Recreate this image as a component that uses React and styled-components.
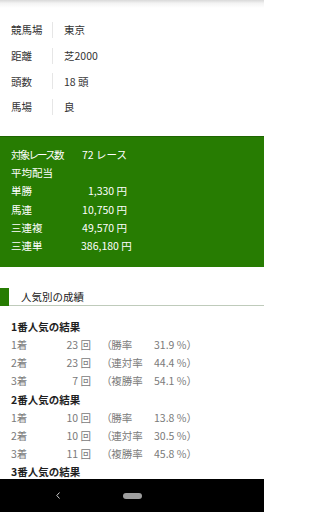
import React from "react";
import styled, { createGlobalStyle } from "styled-components";

const GlobalStyle = createGlobalStyle`
  html, body {
    margin: 0;
    padding: 0;
    background: #ffffff;
    overflow: hidden;
  }
  body {
    font-family: "Noto Sans CJK JP", "Noto Sans", sans-serif;
  }
`;

const GREEN = "#277c02";

const Screen = styled.div`
  width: 264px;
  height: 512px;
  display: flex;
  flex-direction: column;
  background: #ffffff;
`;

const Content = styled.div`
  flex: 1;
  overflow: hidden;
  display: flex;
  flex-direction: column;
`;

const TopShadow = styled.div`
  height: 8px;
  flex-shrink: 0;
  background: linear-gradient(to bottom, #d9d9d9, #f3f3f3 40%, #ffffff);
`;

const InfoList = styled.div`
  padding-top: 9px;
  display: flex;
  flex-direction: column;
`;

const InfoRow = styled.div`
  height: 25.7px;
  display: flex;
  align-items: center;
  padding-left: 11px;
  font-size: 10.5px;
  color: #333333;
`;

const InfoLabel = styled.div`
  width: 41px;
`;

const Divider = styled.div`
  width: 1px;
  height: 16px;
  background: #e6e6e6;
  margin-right: 11px;
`;

const Summary = styled.div`
  margin-top: 16.2px;
  background: ${GREEN};
  border-top: 1px solid #1e6500;
  padding: 9px 0 12px 11px;
  color: #ffffff;
  font-size: 10.5px;
  line-height: 18.2px;
`;

const SummaryRow = styled.div`
  display: grid;
  grid-template-columns: 70px 46px;
  align-items: center;
`;

const SummaryLabel = styled.div`
  letter-spacing: ${(props) => (props.$tight ? "-1.8px" : "normal")};
  white-space: nowrap;
`;

const SummaryValue = styled.div`
  text-align: right;
  white-space: nowrap;
`;

const SectionHeader = styled.div`
  margin-top: 21px;
  display: flex;
  height: 18px;
  flex-shrink: 0;
`;

const SectionMark = styled.div`
  width: 9px;
  background: ${GREEN};
`;

const SectionTitle = styled.div`
  flex: 1;
  padding-left: 12px;
  font-size: 10.5px;
  line-height: 17px;
  color: #222222;
  border-bottom: 1px solid #bfcbbb;
`;

const Results = styled.div`
  margin-top: 12px;
  padding-left: 11px;
  font-size: 10.5px;
  line-height: 18.1px;
`;

const GroupTitle = styled.div`
  font-weight: 700;
  color: #1f1f1f;
`;

const ResultRow = styled.div`
  display: grid;
  grid-template-columns: 40px 40px 63px auto;
  color: #7a7a7a;
  white-space: nowrap;
`;

const Count = styled.div`
  text-align: right;
`;

const RateLabel = styled.div`
  padding-left: 15px;
  font-feature-settings: "palt";
`;

const NavBar = styled.div`
  height: 33px;
  flex-shrink: 0;
  background: #000000;
  display: flex;
  align-items: center;
  padding-left: 56px;
`;

const HomePill = styled.div`
  width: 19px;
  height: 6px;
  border-radius: 3px;
  background: #9e9e9e;
  margin-left: 63px;
`;

const info = [
  ["競馬場", "東京"],
  ["距離", "芝2000"],
  ["頭数", "18 頭"],
  ["馬場", "良"],
];

const payouts = [
  ["単勝", "1,330 円"],
  ["馬連", "10,750 円"],
  ["三連複", "49,570 円"],
  ["三連単", "386,180 円"],
];

const rateNames = ["（勝率", "（連対率", "（複勝率"];

const groups = [
  { title: "1番人気の結果", counts: [23, 23, 7], rates: ["31.9", "44.4", "54.1"] },
  { title: "2番人気の結果", counts: [10, 10, 11], rates: ["13.8", "30.5", "45.8"] },
  { title: "3番人気の結果", counts: [], rates: [] },
];

export default function App() {
  return (
    <Screen>
      <GlobalStyle />
      <Content>
        <TopShadow />
        <InfoList>
          {info.map(([label, value]) => (
            <InfoRow key={label}>
              <InfoLabel>{label}</InfoLabel>
              <Divider />
              <div>{value}</div>
            </InfoRow>
          ))}
        </InfoList>

        <Summary>
          <SummaryRow>
            <SummaryLabel $tight>対象レース数</SummaryLabel>
            <SummaryValue>72 レース</SummaryValue>
          </SummaryRow>
          <SummaryRow>
            <SummaryLabel>平均配当</SummaryLabel>
          </SummaryRow>
          {payouts.map(([label, value]) => (
            <SummaryRow key={label}>
              <SummaryLabel>{label}</SummaryLabel>
              <SummaryValue>{value}</SummaryValue>
            </SummaryRow>
          ))}
        </Summary>

        <SectionHeader>
          <SectionMark />
          <SectionTitle>人気別の成績</SectionTitle>
        </SectionHeader>

        <Results>
          {groups.map((g) => (
            <div key={g.title}>
              <GroupTitle>{g.title}</GroupTitle>
              {g.counts.map((c, i) => (
                <ResultRow key={i}>
                  <div>{i + 1}着</div>
                  <Count>{c} 回</Count>
                  <RateLabel>{rateNames[i]}</RateLabel>
                  <div>{g.rates[i]} %）</div>
                </ResultRow>
              ))}
            </div>
          ))}
        </Results>
      </Content>

      <NavBar>
        <svg width="4" height="7" viewBox="0 0 4 7">
          <polyline points="3.5,0.5 0.8,3.5 3.5,6.5" fill="none" stroke="#cfcfcf" strokeWidth="1" />
        </svg>
        <HomePill />
      </NavBar>
    </Screen>
  );
}
